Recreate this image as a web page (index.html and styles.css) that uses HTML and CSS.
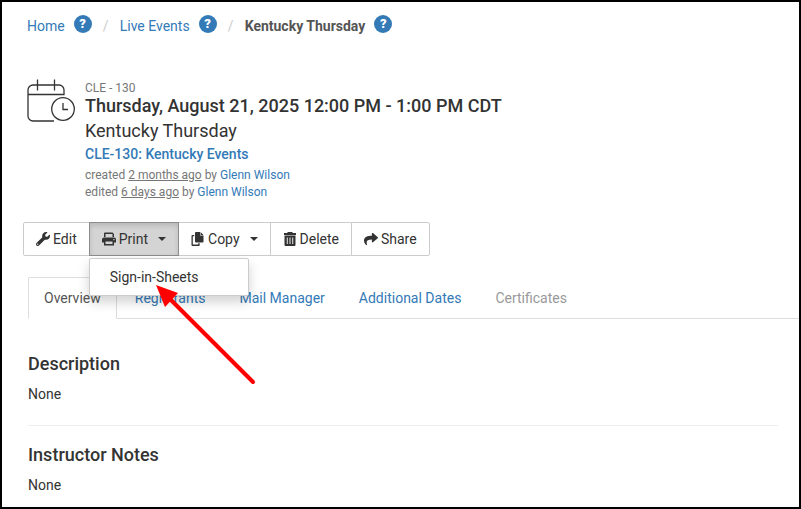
FILE: index.html
```html
<!DOCTYPE html>
<html lang="en">
<head>
    <meta charset="UTF-8">
    <meta name="viewport" content="width=device-width, initial-scale=1.0">
    <title>Kentucky Thursday</title>
    <link rel="stylesheet" href="styles.css">
</head>
<body>
    <nav aria-label="Breadcrumb">
        <ol class="breadcrumb">
            <li><a href="#">Home</a><button type="button" class="help" aria-label="Help">?</button></li>
            <li><a href="#">Live Events</a><button type="button" class="help" aria-label="Help">?</button></li>
            <li><strong>Kentucky Thursday</strong><button type="button" class="help" aria-label="Help">?</button></li>
        </ol>
    </nav>

    <header class="event-header">
        <svg class="event-icon" viewBox="0 0 48 44" aria-hidden="true">
            <path d="M1 15.500H37V11a5 5 0 0 0-5-5H6a5 5 0 0 0-5 5v26a5 5 0 0 0 5 5h21M10.500 0.500v11M27.500 0.500v11"/>
            <circle cx="36" cy="30" r="11.300"/>
            <path d="M36 24v6.500h5"/>
        </svg>
        <div>
            <div class="event-code">CLE - 130</div>
            <h1>Thursday, August 21, 2025 12:00 PM - 1:00 PM CDT</h1>
            <div class="event-name">Kentucky Thursday</div>
            <a class="event-parent" href="#">CLE-130: Kentucky Events</a>
            <div class="event-meta">created <u>2 months ago</u> by <a href="#">Glenn Wilson</a></div>
            <div class="event-meta">edited <u>6 days ago</u> by <a href="#">Glenn Wilson</a></div>
        </div>
    </header>

    <div class="toolbar">
        <button type="button" class="btn">
            <svg viewBox="0 0 512 512" aria-hidden="true"><path d="M507.730 109.100c-2.240-9.030-13.540-12.090-20.120-5.510l-74.360 74.360-67.880-11.310-11.310-67.880 74.360-74.360c6.620-6.620 3.430-17.900-5.660-20.160-47.380-11.740-99.550.91-136.580 37.930-39.640 39.640-50.550 97.100-34.050 147.200L18.740 402.760c-24.990 24.990-24.990 65.510 0 90.500 24.990 24.990 65.510 24.990 90.500 0l213.210-213.210c50.120 16.710 107.470 5.680 147.370-34.220 37.070-37.070 49.700-89.320 37.910-136.730zM64 472c-13.250 0-24-10.750-24-24 0-13.260 10.750-24 24-24s24 10.740 24 24c0 13.250-10.750 24-24 24z"/></svg>
            Edit
        </button>
        <div class="dropdown">
            <button type="button" class="btn active" aria-expanded="true">
                <svg viewBox="0 0 14 14" aria-hidden="true"><path fill-rule="evenodd" d="M3 0.500h7.500L12 2v3H10.500V2H3.500v3H2V1.500a1 1 0 0 1 1-1zM2 5.500h10a2 2 0 0 1 2 2V10.500h-2v3H2v-3H0V7.500a2 2 0 0 1 2-2zM3.500 9.500V12h7V9.500zM11.300 7v1.200h1.200V7z"/></svg>
                Print
                <span class="caret"></span>
            </button>
            <div class="dropdown-menu">
                <a href="#">Sign-in-Sheets</a>
            </div>
        </div>
        <button type="button" class="btn">
            <svg viewBox="0 0 14 14" aria-hidden="true"><path d="M5 0h4v3.500h3.500V9.500a1 1 0 0 1-1 1H5a1 1 0 0 1-1-1V1a1 1 0 0 1 1-1zM9.500 0l3 3h-3z"/><path d="M1.500 3H3.200v1.300H1.800v8.200H7.200V11.300H8.700V13a1 1 0 0 1-1 1H1.500a1 1 0 0 1-1-1V4a1 1 0 0 1 1-1z"/></svg>
            Copy
            <span class="caret"></span>
        </button>
        <button type="button" class="btn">
            <svg viewBox="0 0 14 14" aria-hidden="true"><path fill-rule="evenodd" d="M5 0h4l1 1h3v2H1V1h3zM1.500 3.500h11V13a1 1 0 0 1-1 1h-9a1 1 0 0 1-1-1zM3.800 5.500v6.500h.9V5.500zM6.550 5.500v6.500h.9V5.500zM9.300 5.500v6.500h.9V5.500z"/></svg>
            Delete
        </button>
        <button type="button" class="btn">
            <svg viewBox="0 0 512 512" aria-hidden="true"><path d="M503.691 189.836L327.687 37.851C312.281 24.546 288 35.347 288 56.015v80.053C127.371 137.907 0 170.100 0 322.326c0 61.441 39.581 122.309 83.333 154.132 13.653 9.931 33.111-2.533 28.077-18.631C66.066 312.814 132.917 274.316 288 272.085V360c0 20.700 24.300 31.453 39.687 18.164l176.004-152c11.071-9.562 11.086-26.753 0-36.328z"/></svg>
            Share
        </button>
    </div>

    <!-- arrow that points at the open menu item -->
    <svg class="pointer" viewBox="0 0 100 100" aria-hidden="true">
        <path d="M97 97L13 13" stroke="#f00" stroke-width="4" stroke-linecap="round"/>
        <path d="M0 0L22 8L9 22z" fill="#f00"/>
    </svg>

    <nav class="tabs">
        <a class="selected" href="#">Overview</a>
        <a href="#">Registrants</a>
        <a href="#">Mail Manager</a>
        <a href="#">Additional Dates</a>
        <span class="disabled">Certificates</span>
    </nav>

    <main>
        <section>
            <h2>Description</h2>
            <p>None</p>
        </section>
        <section>
            <h2>Instructor Notes</h2>
            <p>None</p>
        </section>
    </main>
</body>
</html>
```
FILE: styles.css
```css
* {
    box-sizing: border-box;
}

body {
    margin: 0;
    min-height: 100vh;
    padding: 13px 0 0 26px;
    border: 2px solid #000;
    position: relative;
    background-color: #fff;
    color: #333;
    font-family: Roboto, "Liberation Sans", sans-serif;
    font-size: 14px;
    line-height: 20px;
}

a {
    color: #337ab7;
    text-decoration: none;
}

h1,
h2,
p {
    margin: 0;
}

/* Breadcrumb */
.breadcrumb {
    display: flex;
    margin: 0 0 0 -1px;
    padding: 0;
    list-style: none;
}

.breadcrumb li {
    display: flex;
    align-items: center;
}

.breadcrumb li + li::before {
    content: "/";
    width: 6px;
    margin: 0 11px;
    color: #ccc;
}

.breadcrumb strong {
    color: #555;
}

.help {
    width: 18px;
    height: 18px;
    margin: 0 0 4px 9px;
    padding: 0;
    border: 0;
    border-radius: 50%;
    background-color: #337ab7;
    color: #fff;
    font: 900 13px/18px Roboto, "Liberation Sans", sans-serif;
    cursor: pointer;
}

/* Event header */
.event-header {
    display: flex;
    align-items: flex-start;
    gap: 10px;
    margin: 41px 0 0 -1px;
}

.event-icon {
    width: 48px;
    height: 44px;
    margin-top: 1px;
    fill: none;
    stroke: #333;
    stroke-width: 1.3;
}

.event-code {
    color: #777;
    font-size: 12px;
}

h1,
h2 {
    font-size: 18px;
    font-weight: 500;
}

h1 {
    line-height: 16px;
}

.event-name {
    margin-top: 2px;
    font-size: 18px;
    line-height: 30px;
}

.event-parent {
    display: block;
    margin-bottom: 5px;
    font-weight: 500;
    line-height: 16px;
}

.event-meta {
    color: #777;
    font-size: 12px;
    line-height: 17px;
}

/* Toolbar */
.toolbar {
    display: flex;
    margin: 21px 0 0 -5px;
}

.btn {
    display: flex;
    align-items: center;
    height: 34px;
    margin-right: -1px;
    padding: 0 12px;
    border: 1px solid #ccc;
    background-color: #fff;
    color: #333;
    font: inherit;
    cursor: pointer;
}

.btn svg {
    width: 14px;
    height: 14px;
    margin-right: 3px;
    fill: #333;
}

.btn.active {
    position: relative;
    border-color: #8c8c8c;
    background-color: #d4d4d4;
    box-shadow: inset 0 3px 5px rgba(0, 0, 0, 0.125);
}

.toolbar > .btn:first-child {
    border-radius: 2px 0 0 2px;
}

.toolbar > .btn:last-child {
    border-radius: 0 2px 2px 0;
}

.caret {
    margin-left: 10px;
    border-top: 4px solid #333;
    border-right: 4px solid transparent;
    border-left: 4px solid transparent;
}

.dropdown {
    position: relative;
}

.dropdown-menu {
    position: absolute;
    top: 100%;
    left: 0;
    z-index: 1;
    min-width: 160px;
    margin-top: 2px;
    padding: 5px 0;
    border: 1px solid #ccc;
    border-radius: 2px;
    background-color: #fff;
    box-shadow: 0 6px 12px rgba(0, 0, 0, 0.175);
}

.dropdown-menu a {
    display: block;
    padding: 3px 20px;
    color: #333;
}

.pointer {
    position: absolute;
    top: 283px;
    left: 154px;
    z-index: 2;
    width: 100px;
    height: 100px;
    pointer-events: none;
}

/* Tabs */
.tabs {
    display: flex;
    gap: 2px;
    margin-top: 21px;
    border-bottom: 1px solid #ddd;
}

.tabs > * {
    margin-bottom: -1px;
    padding: 10px 15px;
    border: 1px solid transparent;
}

.tabs .selected {
    border-color: #ddd #ddd #fff;
    border-radius: 2px 2px 0 0;
    background-color: #fff;
    color: #555;
}

.tabs .disabled {
    color: #999;
}

/* Sections */
main {
    padding: 35px 21px 0 0;
}

section + section {
    margin-top: 21px;
    padding-top: 19px;
    border-top: 1px solid #eee;
}

section p {
    margin-top: 10px;
}
```
